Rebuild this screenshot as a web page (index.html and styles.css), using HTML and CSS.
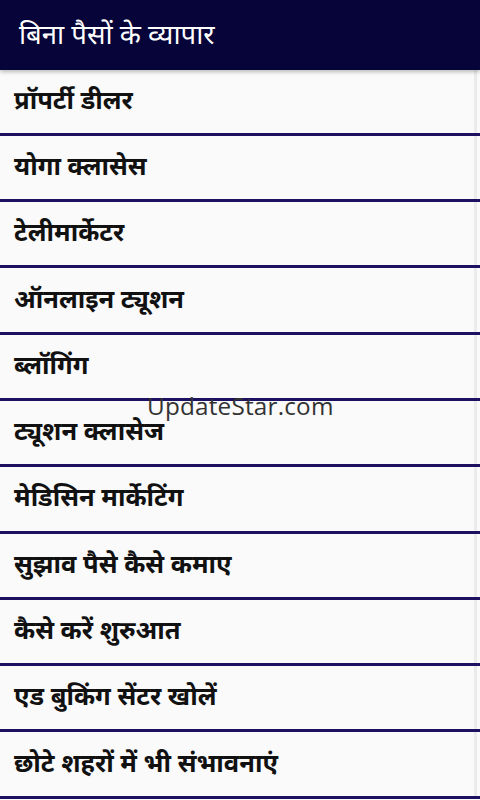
FILE: index.html
```html
<!DOCTYPE html>
<html lang="hi">
<head>
<meta charset="utf-8">
<title>बिना पैसों के व्यापार</title>
<link rel="stylesheet" href="styles.css">
</head>
<body>
<div class="app">
  <header class="appbar"><h1 class="title">बिना पैसों के व्यापार</h1></header>
  <ul class="list">
    <li class="row"><span class="label">प्रॉपर्टी डीलर</span></li>
    <li class="row"><span class="label">योगा क्लासेस</span></li>
    <li class="row"><span class="label">टेलीमार्केटर</span></li>
    <li class="row"><span class="label">ऑनलाइन ट्यूशन</span></li>
    <li class="row"><span class="label">ब्लॉगिंग</span></li>
    <li class="row"><span class="label">ट्यूशन क्लासेज</span></li>
    <li class="row"><span class="label">मेडिसिन मार्केटिंग</span></li>
    <li class="row"><span class="label">सुझाव पैसे कैसे कमाए</span></li>
    <li class="row"><span class="label">कैसे करें शुरुआत</span></li>
    <li class="row"><span class="label">एड बुकिंग सेंटर खोलें</span></li>
    <li class="row"><span class="label">छोटे शहरों में भी संभावनाएं</span></li>
  </ul>
  <div class="watermark">UpdateStar.com</div>
</div>
</body>
</html>
```
FILE: styles.css
```css
* { box-sizing: border-box; }
html, body {
  margin: 0;
  padding: 0;
  background: #fafafa;
}
body {
  font-family: "Noto Sans Devanagari", "Lohit Devanagari", "Noto Sans", sans-serif;
}
.app {
  position: relative;
  width: 480px;
  height: 800px;
  overflow: hidden;
  background: #fafafa;
}
.appbar {
  height: 69.5px;
  background: #060438;
  display: flex;
  align-items: center;
  padding-left: 19px;
  padding-top: 4px;
  position: relative;
  z-index: 1;
  box-shadow: 0 2px 4px rgba(0, 0, 0, 0.25);
}
.title {
  margin: 0;
  color: #ffffff;
  font-size: 27.5px;
  font-weight: 400;
}
.list {
  list-style: none;
  margin: 0;
  padding: 0;
}
.row {
  height: 66.3px;
  display: flex;
  border-bottom: 3px solid #1b1160;
  background: #fafafa;
}
.label {
  flex: 1;
  display: flex;
  align-items: center;
  padding-left: 14px;
  padding-top: 2px;
  margin-right: 3px;
  border-right: 3px solid #ebebeb;
  font-size: 25.5px;
  font-weight: 700;
  color: #111111;
}
.watermark {
  position: absolute;
  left: 147px;
  top: 389px;
  font-family: "Open Sans", sans-serif;
  font-size: 24.3px;
  font-weight: 400;
  color: #333333;
  letter-spacing: 0.2px;
}
```
